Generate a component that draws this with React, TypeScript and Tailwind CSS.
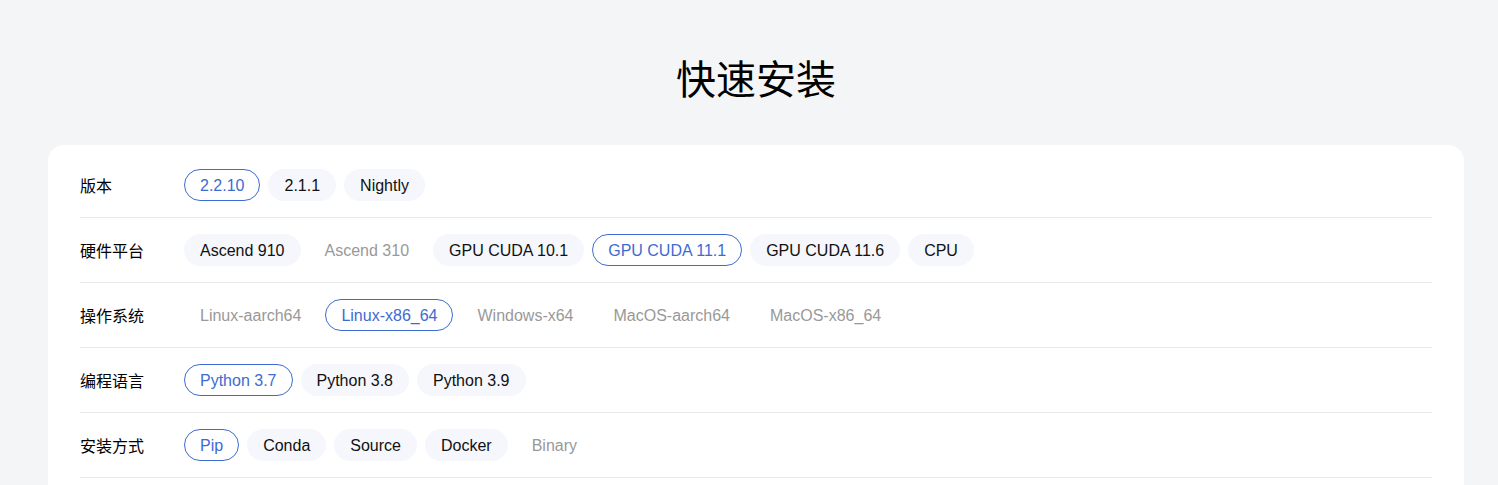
import React from "react";

type Opt = { label: string; state: "sel" | "on" | "off" };

const rows: { title: string; opts: Opt[] }[] = [
  {
    title: "版本",
    opts: [
      { label: "2.2.10", state: "sel" },
      { label: "2.1.1", state: "on" },
      { label: "Nightly", state: "on" },
    ],
  },
  {
    title: "硬件平台",
    opts: [
      { label: "Ascend 910", state: "on" },
      { label: "Ascend 310", state: "off" },
      { label: "GPU CUDA 10.1", state: "on" },
      { label: "GPU CUDA 11.1", state: "sel" },
      { label: "GPU CUDA 11.6", state: "on" },
      { label: "CPU", state: "on" },
    ],
  },
  {
    title: "操作系统",
    opts: [
      { label: "Linux-aarch64", state: "off" },
      { label: "Linux-x86_64", state: "sel" },
      { label: "Windows-x64", state: "off" },
      { label: "MacOS-aarch64", state: "off" },
      { label: "MacOS-x86_64", state: "off" },
    ],
  },
  {
    title: "编程语言",
    opts: [
      { label: "Python 3.7", state: "sel" },
      { label: "Python 3.8", state: "on" },
      { label: "Python 3.9", state: "on" },
    ],
  },
  {
    title: "安装方式",
    opts: [
      { label: "Pip", state: "sel" },
      { label: "Conda", state: "on" },
      { label: "Source", state: "on" },
      { label: "Docker", state: "on" },
      { label: "Binary", state: "off" },
    ],
  },
];

function Pill({ o }: { o: Opt }) {
  const cls =
    o.state === "sel"
      ? "border-[#3e6bd1] text-[#3e6bd1] bg-white"
      : o.state === "on"
      ? "border-transparent bg-[#f5f7fc] text-[#111]"
      : "border-transparent bg-transparent text-[#999]";
  return (
    <div
      className={`h-[32px] px-[15px] pt-[2px] border rounded-full flex items-center text-[16px] leading-none whitespace-nowrap ${cls}`}
    >
      {o.label}
    </div>
  );
}

export default function App() {
  return (
    <div
      className="min-h-screen bg-[#f4f5f7] pt-[56px]"
      style={{ fontFamily: '"Liberation Sans", Arial, "Noto Sans CJK SC", sans-serif' }}
    >
      <div className="ml-[48px] w-[1416px]">
        <h1
          className="text-center text-[40px] leading-[42px] font-normal text-black"
          style={{ fontFamily: '"Noto Sans CJK SC", sans-serif' }}
        >
          快速安装
        </h1>
        <div className="mt-[47px] bg-white rounded-[16px] px-[32px] pt-[8px] pb-[40px]">
          {rows.map((r) => (
            <div
              key={r.title}
              className="flex items-center py-[16px] border-b border-[#e8e9ec]"
            >
              <div
                className="w-[104px] shrink-0 text-[16px] leading-[20px] text-black"
                style={{ fontFamily: '"Noto Sans CJK SC", sans-serif' }}
              >
                {r.title}
              </div>
              <div className="flex gap-[8px]">
                {r.opts.map((o) => (
                  <Pill key={o.label} o={o} />
                ))}
              </div>
            </div>
          ))}
        </div>
      </div>
    </div>
  );
}
